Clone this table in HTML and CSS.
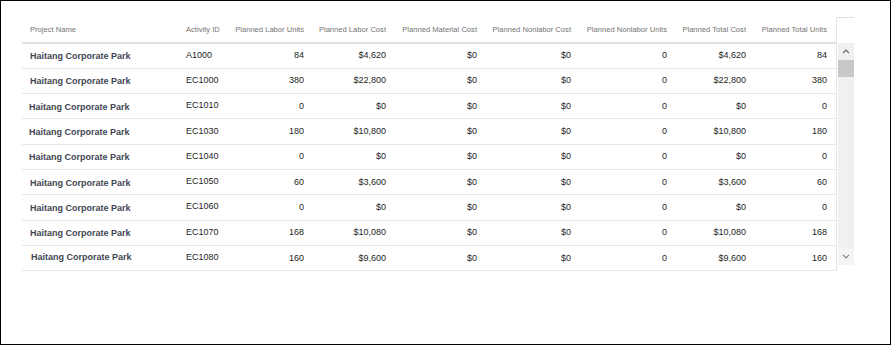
FILE: index.html
```html
<!DOCTYPE html>
<html>
<head>
<meta charset="utf-8">
<link rel="stylesheet" href="styles.css">
</head>
<body>
<div class="frame">
  <div class="grid-wrap">
    <div class="table-area">
      <table class="data">
        <colgroup>
          <col class="c1"><col class="c2"><col class="c3"><col class="c4"><col class="c5"><col class="c6"><col class="c7"><col class="c8"><col class="c9">
        </colgroup>
        <thead>
          <tr>
            <th class="left">Project Name</th>
            <th class="left">Activity ID</th>
            <th>Planned Labor Units</th>
            <th>Planned Labor Cost</th>
            <th>Planned Material Cost</th>
            <th>Planned Nonlabor Cost</th>
            <th>Planned Nonlabor Units</th>
            <th>Planned Total Cost</th>
            <th>Planned Total Units</th>
          </tr>
        </thead>
        <tbody>
          <tr><td class="proj">Haitang Corporate Park</td><td class="act">A1000</td><td>84</td><td>$4,620</td><td>$0</td><td>$0</td><td>0</td><td>$4,620</td><td>84</td></tr>
          <tr><td class="proj">Haitang Corporate Park</td><td class="act">EC1000</td><td>380</td><td>$22,800</td><td>$0</td><td>$0</td><td>0</td><td>$22,800</td><td>380</td></tr>
          <tr><td class="proj shift">Haitang Corporate Park</td><td class="act">EC1010</td><td>0</td><td>$0</td><td>$0</td><td>$0</td><td>0</td><td>$0</td><td>0</td></tr>
          <tr><td class="proj shift">Haitang Corporate Park</td><td class="act">EC1030</td><td>180</td><td>$10,800</td><td>$0</td><td>$0</td><td>0</td><td>$10,800</td><td>180</td></tr>
          <tr><td class="proj shift">Haitang Corporate Park</td><td class="act">EC1040</td><td>0</td><td>$0</td><td>$0</td><td>$0</td><td>0</td><td>$0</td><td>0</td></tr>
          <tr><td class="proj">Haitang Corporate Park</td><td class="act">EC1050</td><td>60</td><td>$3,600</td><td>$0</td><td>$0</td><td>0</td><td>$3,600</td><td>60</td></tr>
          <tr><td class="proj">Haitang Corporate Park</td><td class="act">EC1060</td><td>0</td><td>$0</td><td>$0</td><td>$0</td><td>0</td><td>$0</td><td>0</td></tr>
          <tr><td class="proj">Haitang Corporate Park</td><td class="act">EC1070</td><td>168</td><td>$10,080</td><td>$0</td><td>$0</td><td>0</td><td>$10,080</td><td>168</td></tr>
          <tr><td class="proj nudge">Haitang Corporate Park</td><td class="act">EC1080</td><td>160</td><td>$9,600</td><td>$0</td><td>$0</td><td>0</td><td>$9,600</td><td>160</td></tr>
        </tbody>
      </table>
    </div>
    <div class="scroll-col">
      <div class="scroll-head"></div>
      <div class="track">
        <div class="btn">
          <svg width="8" height="5" viewBox="0 0 8 5"><path d="M1 4.2 L4 1.2 L7 4.2" fill="none" stroke="#606060" stroke-width="1.2"/></svg>
        </div>
        <div class="thumb"></div>
        <div class="track-fill"></div>
        <div class="btn btn-down">
          <svg width="8" height="5" viewBox="0 0 8 5"><path d="M1 0.8 L4 3.8 L7 0.8" fill="none" stroke="#808080" stroke-width="1.2"/></svg>
        </div>
      </div>
    </div>
  </div>
</div>
</body>
</html>
```

FILE: styles.css
```css
html, body {
  margin: 0;
  padding: 0;
  background: #ffffff;
}

.frame {
  width: 891px;
  height: 345px;
  box-sizing: border-box;
  border: 1px solid #000000;
  padding: 16px 0 0 21px;
}

.grid-wrap {
  display: flex;
  align-items: flex-start;
}

.table-area {
  width: 814px;
  border-right: 1px solid #e2e5e9;
}

.data {
  width: 814px;
  table-layout: fixed;
  border-collapse: collapse;
  font-family: "Liberation Sans", Arial, sans-serif;
}

.c1 { width: 156px; }
.c2 { width: 50px; }
.c3 { width: 85px; }
.c4 { width: 82px; }
.c5 { width: 91px; }
.c6 { width: 94px; }
.c7 { width: 96px; }
.c8 { width: 79px; }
.c9 { width: 81px; }

.data thead tr {
  height: 26px;
}

.data th {
  padding: 0 9px 0 0;
  font-size: 7.6px;
  font-weight: normal;
  color: #747474;
  text-align: right;
  white-space: nowrap;
  border-bottom: 2px solid #dfe3e8;
  vertical-align: middle;
  line-height: 10px;
}

.data th.left {
  text-align: left;
  padding: 0 0 0 8px;
}

.data tbody tr {
  height: 25.3px;
}

.data td {
  box-sizing: border-box;
  padding: 0 9px 0 0;
  font-size: 9px;
  line-height: 11px;
  color: #1e1e1e;
  text-align: right;
  white-space: nowrap;
  border-bottom: 1px solid #e8e8e8;
  vertical-align: middle;
}

.data td.act {
  text-align: left;
  padding: 0 0 1px 8px;
}

.data td.proj {
  text-align: left;
  padding: 2px 0 0 8px;
  font-weight: bold;
  color: #3f4653;
}

.data td.proj.shift {
  padding-left: 7px;
}

.data td.proj.nudge {
  padding: 0 0 2px 9px;
}

.scroll-col {
  width: 17px;
  display: flex;
  flex-direction: column;
}

.scroll-head {
  height: 26px;
  border-top: 1px solid #dedede;
  box-sizing: border-box;
}

.track {
  height: 222px;
  width: 16px;
  margin-left: 1px;
  background: #f0f0f0;
  display: flex;
  flex-direction: column;
}

.btn {
  height: 17px;
  display: flex;
  align-items: center;
  justify-content: center;
}

.thumb {
  height: 17px;
  background: #c8c8c8;
}

.track-fill {
  flex: 1;
}

.btn-down {
  background: #f4f4f4;
}
```
